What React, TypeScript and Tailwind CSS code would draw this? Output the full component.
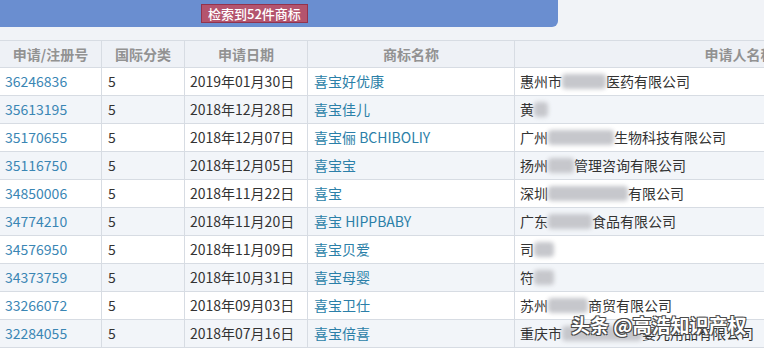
import React from "react";

type Row = {
  no: string;
  cls: string;
  date: string;
  name: string;
  pre: string;
  blur: number;
  post: string;
};

const rows: Row[] = [
  { no: "36246836", cls: "5", date: "2019年01月30日", name: "喜宝好优康", pre: "惠州市", blur: 44, post: "医药有限公司" },
  { no: "35613195", cls: "5", date: "2018年12月28日", name: "喜宝佳儿", pre: "黄", blur: 14, post: "" },
  { no: "35170655", cls: "5", date: "2018年12月07日", name: "喜宝俪 BCHIBOLIY", pre: "广州", blur: 66, post: "生物科技有限公司" },
  { no: "35116750", cls: "5", date: "2018年12月05日", name: "喜宝宝", pre: "扬州", blur: 26, post: "管理咨询有限公司" },
  { no: "34850006", cls: "5", date: "2018年11月22日", name: "喜宝", pre: "深圳", blur: 80, post: "有限公司" },
  { no: "34774210", cls: "5", date: "2018年11月20日", name: "喜宝 HIPPBABY", pre: "广东", blur: 44, post: "食品有限公司" },
  { no: "34576950", cls: "5", date: "2018年11月09日", name: "喜宝贝爱", pre: "司", blur: 20, post: "" },
  { no: "34373759", cls: "5", date: "2018年10月31日", name: "喜宝母婴", pre: "符", blur: 20, post: "" },
  { no: "33266072", cls: "5", date: "2018年09月03日", name: "喜宝卫仕", pre: "苏州", blur: 40, post: "商贸有限公司" },
  { no: "32284055", cls: "5", date: "2018年07月16日", name: "喜宝倍喜", pre: "重庆市", blur: 80, post: "婴儿用品有限公司" },
];

const grid = "grid grid-cols-[102px_83px_123px_207px_450px]";

export default function App() {
  return (
    <div
      className="relative w-[764px] h-[348px] overflow-hidden bg-white text-[14px] text-[#333]"
      style={{ fontFamily: '"Noto Sans CJK SC", "Noto Sans", sans-serif' }}
    >
      {/* top result bar */}
      <div className="h-[40px] bg-[#f1f3f7]">
        <div className="flex h-[27px] w-[558px] items-start rounded-br-[6px] bg-[#6a8ed0]">
          <span className="ml-[201px] mt-[4px] flex h-[19px] items-center border border-[#93334d] bg-[#b4546e] px-[6px] text-[13px] font-medium leading-none text-white">
            检索到52件商标
          </span>
        </div>
      </div>

      {/* header */}
      <div className={`${grid} h-[28px] border-y border-[#d7dce3] bg-[#eef1f6] font-bold text-[#929292]`}>
        {["申请/注册号", "国际分类", "申请日期", "商标名称", "申请人名称"].map((h) => (
          <div key={h} className="flex items-center justify-center border-r border-[#d7dce3]">
            {h}
          </div>
        ))}
      </div>

      {/* rows */}
      {rows.map((r, i) => (
        <div
          key={r.no}
          className={`${grid} h-[28px] border-b border-[#d7dce3] ${i % 2 === 1 ? "bg-[#f2f5f9]" : "bg-white"}`}
        >
          <div className="flex items-center border-r border-[#d7dce3] pl-[5px] text-[#3a86b4]">{r.no}</div>
          <div className="flex items-center border-r border-[#d7dce3] pl-[6px]">{r.cls}</div>
          <div className="flex items-center border-r border-[#d7dce3] pl-[5px]">{r.date}</div>
          <div className="flex items-center border-r border-[#d7dce3] pl-[6px] text-[#2b7fa8]">{r.name}</div>
          <div className="flex items-center pl-[5px]">
            <span>{r.pre}</span>
            <span
              className="inline-block h-[15px] rounded-[4px] bg-[#c6c7cc] blur-[2px]"
              style={{ width: r.blur }}
            />
            <span>{r.post}</span>
          </div>
        </div>
      ))}

      {/* watermark */}
      <div
        className="absolute left-[571px] top-[315px] text-[19px] font-bold leading-none text-white"
        style={{
          textShadow:
            "1px 1px 0 #4a4a4a, -1px -1px 0 #4a4a4a, 1px -1px 0 #4a4a4a, -1px 1px 0 #4a4a4a",
        }}
      >
        头条 @高浩知识产权
      </div>
    </div>
  );
}
